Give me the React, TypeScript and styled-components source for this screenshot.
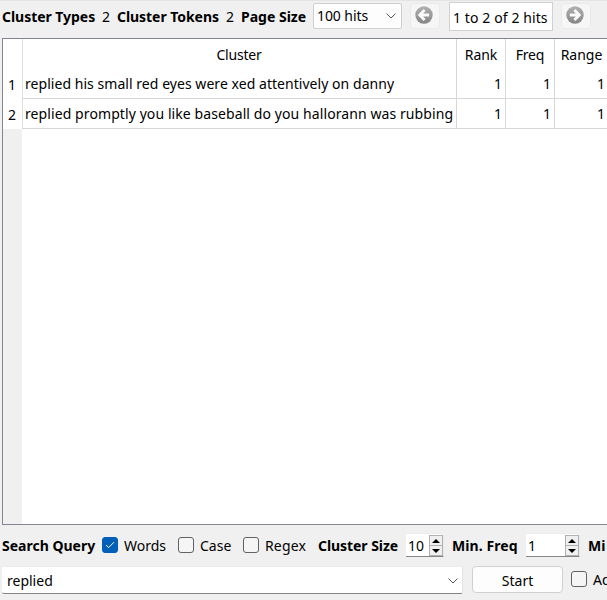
import React from "react";
import styled, { createGlobalStyle } from "styled-components";

const GlobalStyle = createGlobalStyle`
  *, *::before, *::after { box-sizing: border-box; }
  html, body { margin: 0; padding: 0; overflow: hidden; }
  body {
    background: #f0f0f0;
    color: #000;
    font: 14px/20px "Noto Sans", "Open Sans", sans-serif;
  }
`;

const Window = styled.main`
  width: 607px;
  height: 600px;
  display: flex;
  flex-direction: column;
  overflow: hidden;
  white-space: nowrap;
  background: #f0f0f0;
  border-top: 1px solid #e4e4e4;
`;

const Toolbar = styled.header`
  flex: none;
  height: 37px;
  padding: 1px 0 0 2px;
  display: flex;
  align-items: flex-start;
`;

const Text = styled.span<{ $width?: number; $track?: number; $bold?: boolean }>`
  flex: none;
  width: ${(p) => (p.$width ? `${p.$width}px` : "auto")};
  letter-spacing: ${(p) => p.$track ?? 0}px;
  font-weight: ${(p) => (p.$bold ? 700 : 400)};
`;

const ToolbarText = styled(Text)`
  padding-top: 5px;
`;

const PageSize = styled.div`
  flex: none;
  width: 89px;
  height: 26px;
  margin-top: 1px;
  padding: 0 5px 0 3px;
  display: flex;
  align-items: center;
  justify-content: space-between;
  background: #fdfdfd;
  border: 1px solid #cfcfcf;
  border-radius: 2px;
`;

const PagerButton = styled.button<{ $gap: number }>`
  flex: none;
  width: 30px;
  height: 26px;
  margin: 1px 0 0 ${(p) => p.$gap}px;
  padding: 0 2px 2px 0;
  display: flex;
  align-items: center;
  justify-content: center;
  background: #f6f6f6;
  border: 1px solid #eaeaea;
  border-radius: 4px;
`;

const HitRange = styled.div`
  flex: none;
  width: 104px;
  height: 29px;
  margin-left: 9px;
  padding: 5px 0 0 3px;
  background: #fff;
  border: 1px solid #d0d0d0;
`;

const TableFrame = styled.section`
  flex: none;
  height: 487px;
  margin-left: 2px;
  display: flex;
  background: #fff;
  border: 1px solid #82878f;
  border-right: 0;
`;

const RowNumbers = styled.div`
  flex: none;
  width: 19px;
  padding-top: 30px;
  background: linear-gradient(#fff 90px, #f0f0f0 90px);
`;

const RowNumber = styled.div`
  height: 30px;
  padding: 6px 1px 0 0;
  text-align: center;
`;

const Grid = styled.div`
  flex: none;
  width: 586px;
  height: 90px;
  display: grid;
  grid-template-columns: 435px 49px 49px 53px;
  grid-template-rows: 30px 30px 30px;
  box-shadow: inset 1px 0 #e0e0e0;
`;

const Cell = styled.div<{ $align?: "center" | "right"; $track?: number; $head?: boolean; $last?: boolean }>`
  padding: ${(p) => (p.$align === "right" ? "5px 3px 0 0" : p.$align === "center" ? "6px 0 0" : "5px 0 0 3px")};
  text-align: ${(p) => p.$align ?? "left"};
  letter-spacing: ${(p) => p.$track ?? 0}px;
  border-right: ${(p) => (p.$last ? "0" : "1px solid #d8d8d8")};
  border-bottom: ${(p) => (p.$head ? "0" : "1px solid #d8d8d8")};
`;

const Options = styled.div`
  flex: none;
  height: 41px;
  padding: 8px 0 0 2px;
  display: flex;
  align-items: flex-start;
`;

const OptionText = styled(Text)`
  padding-top: 3px;
`;

const SpinLabel = styled(OptionText)`
  padding-left: 8px;
`;

const CheckBox = styled.span<{ $checked?: boolean; $top?: number }>`
  flex: none;
  width: 16px;
  height: 16px;
  margin: ${(p) => p.$top ?? 4}px 6px 0 0;
  display: grid;
  place-items: center;
  background: ${(p) => (p.$checked ? "#005fb8" : "#f5f5f5")};
  border: 1px solid ${(p) => (p.$checked ? "#005fb8" : "#626262")};
  border-radius: 3px;
`;

const Spin = styled.div<{ $width: number }>`
  flex: none;
  width: ${(p) => p.$width}px;
  height: 24px;
  padding: 1px 0 1px 2px;
  display: flex;
  justify-content: space-between;
  background: #fff;
  border-top: 1px solid #ececec;
  border-right: 1px solid #ececec;
  border-bottom: 1px solid #868686;
`;

const SpinValue = styled.span`
  padding-top: 1px;
`;

const Steppers = styled.div`
  width: 14px;
  height: 21px;
  display: grid;
  grid-template-rows: 9px 10px;
  border: 1px solid #b0b0b0;
  background: #f0f0f0;
`;

const Step = styled.span`
  display: grid;
  place-items: center;
  & + & { border-top: 1px solid #b0b0b0; }
`;

const Actions = styled.div`
  flex: 1;
  padding-left: 2px;
  display: flex;
  align-items: flex-start;
`;

const QueryBox = styled.div`
  flex: none;
  width: 461px;
  height: 28px;
  padding: 1px 4px 0 5px;
  display: flex;
  align-items: center;
  justify-content: space-between;
  background: #fff;
  border-top: 1px solid #ececec;
  border-right: 1px solid #e4e4e4;
  border-bottom: 1px solid #868686;
  border-radius: 2px;
`;

const StartButton = styled.button`
  flex: none;
  width: 91px;
  height: 27px;
  margin: 0 8px 0 9px;
  padding: 2px 0 0;
  font: inherit;
  color: inherit;
  background: #fdfdfd;
  border: 1px solid #d0d0d0;
  border-radius: 4px;
`;

const AdvancedText = styled(Text)`
  padding-top: 4px;
`;

const Chevron = () => (
  <svg width="10" height="6" viewBox="0 0 10 6" fill="none" stroke="#555">
    <path d="M.5.6 5 5 9.5.6" />
  </svg>
);

const Arrow = ({ flip = false }: { flip?: boolean }) => (
  <svg width="18" height="18" viewBox="0 0 18 18">
    <defs>
      <linearGradient id="disc" x2="0" y2="1">
        <stop stopColor="#b0b0b0" />
        <stop offset="1" stopColor="#858585" />
      </linearGradient>
    </defs>
    <circle cx="9" cy="9" r="8.7" fill="url(#disc)" />
    <path
      d="M9.6 4 4.7 9l4.9 5M5.4 9h8.8"
      transform={flip ? "matrix(-1 0 0 1 18 0)" : undefined}
      fill="none"
      stroke="#fafafa"
      strokeWidth="2.8"
    />
  </svg>
);

const Triangle = ({ down = false }: { down?: boolean }) => (
  <svg width="8" height="4" viewBox="0 0 8 4">
    <path d={down ? "M0 0h8L4 4z" : "M0 4h8L4 0z"} />
  </svg>
);

const SpinBox = ({ value, width }: { value: string; width: number }) => (
  <Spin $width={width}>
    <SpinValue>{value}</SpinValue>
    <Steppers>
      <Step><Triangle /></Step>
      <Step><Triangle down /></Step>
    </Steppers>
  </Spin>
);

const rows = [
  { text: "replied his small red eyes were xed attentively on danny", track: 0.045 },
  { text: "replied promptly you like baseball do you hallorann was rubbing", track: 0.09 },
];

export default function App() {
  return (
    <>
      <GlobalStyle />
      <Window>
        <Toolbar>
          <ToolbarText $bold $width={100} $track={-0.04}>Cluster Types</ToolbarText>
          <ToolbarText $width={15}>2</ToolbarText>
          <ToolbarText $bold $width={109} $track={-0.05}>Cluster Tokens</ToolbarText>
          <ToolbarText $width={15}>2</ToolbarText>
          <ToolbarText $bold $width={72}>Page Size</ToolbarText>
          <PageSize>
            <Text $track={-0.08}>100 hits</Text>
            <Chevron />
          </PageSize>
          <PagerButton $gap={8} aria-label="Previous page"><Arrow /></PagerButton>
          <HitRange><Text $track={0.1}>1 to 2 of 2 hits</Text></HitRange>
          <PagerButton $gap={8} aria-label="Next page"><Arrow flip /></PagerButton>
        </Toolbar>

        <TableFrame>
          <RowNumbers>
            {rows.map((r, i) => <RowNumber key={r.text}>{i + 1}</RowNumber>)}
          </RowNumbers>
          <Grid>
            <Cell $head $align="center" $track={-0.2}>Cluster</Cell>
            <Cell $head $align="center" $track={-0.1}>Rank</Cell>
            <Cell $head $align="center" $track={-0.2}>Freq</Cell>
            <Cell $head $last $align="center">Range</Cell>
            {rows.map((r) => (
              <React.Fragment key={r.text}>
                <Cell $track={r.track}>{r.text}</Cell>
                <Cell $align="right">1</Cell>
                <Cell $align="right">1</Cell>
                <Cell $last $align="right">1</Cell>
              </React.Fragment>
            ))}
          </Grid>
        </TableFrame>

        <Options>
          <OptionText $bold $width={100}>Search Query</OptionText>
          <CheckBox $checked>
            <svg width="10" height="8" viewBox="0 0 10 8" fill="none" stroke="#fff">
              <path d="m1 4 2.6 2.6L9 1.2" />
            </svg>
          </CheckBox>
          <OptionText $width={54}>Words</OptionText>
          <CheckBox />
          <OptionText $width={43}>Case</OptionText>
          <CheckBox />
          <OptionText $width={53} $track={0.15}>Regex</OptionText>
          <OptionText $bold $width={88} $track={-0.06}>Cluster Size</OptionText>
          <SpinBox value="10" width={38} />
          <SpinLabel $bold $width={82} $track={0.08}>Min. Freq</SpinLabel>
          <SpinBox value="1" width={54} />
          <SpinLabel $bold>Mi</SpinLabel>
        </Options>

        <Actions>
          <QueryBox>
            <Text>replied</Text>
            <Chevron />
          </QueryBox>
          <StartButton>Start</StartButton>
          <CheckBox $top={5} />
          <AdvancedText>Ad</AdvancedText>
        </Actions>
      </Window>
    </>
  );
}
